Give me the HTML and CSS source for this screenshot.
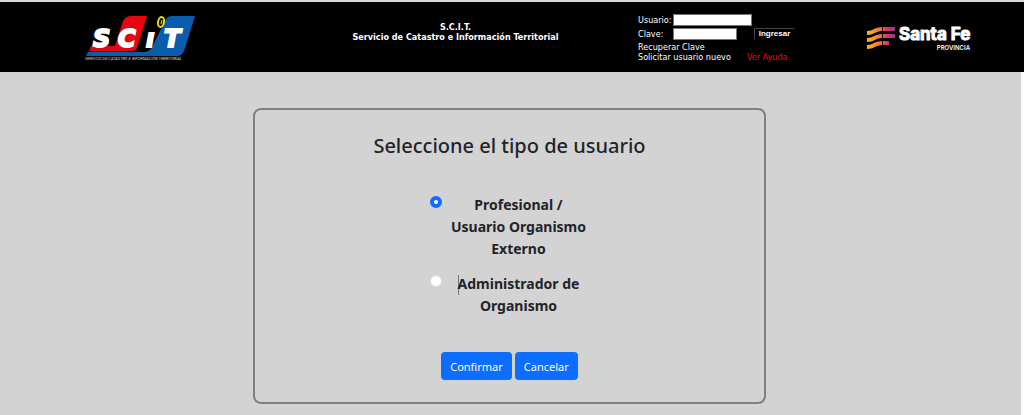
FILE: index.html
```html
<!DOCTYPE html>
<html lang="es">
  <head>
    <meta charset="UTF-8" />
    <meta name="viewport" content="width=device-width, initial-scale=1.0" />
    <title>S.C.I.T.</title>
    <link rel="stylesheet" href="styles.css">
  </head>
  <body>
    <header class="header">
      <svg class="logo-scit" width="112" height="48" viewBox="0 0 112 48" role="img" aria-label="SCIT">
        <path d="M38 6 Q41 1 46 1 H62 L52 33 Q51 36 47 36 H4 L6 31 H30 Z" fill="#e30613" />
        <path d="M80 6 Q82 1 87 1 H110 L99 36 Q97 41 92 41 H1 L3 37 H58 Q65 37 67 32 Z" fill="#0a5cad" />
        <g class="scit-letters">
          <text x="8" y="32">S</text>
          <text x="33" y="32">C</text>
          <text x="61" y="32">ı</text>
          <text x="79" y="32">T</text>
        </g>
        <ellipse cx="76" cy="7" rx="3" ry="5" fill="#111" stroke="#e6dc1e" stroke-width="2" transform="rotate(12 76 7)" />
        <path d="M77 5 L76 9" stroke="#e6dc1e" stroke-width="1" />
        <text class="scit-caption" x="0" y="45">SERVICIO DE CATASTRO E INFORMACIÓN TERRITORIAL</text>
      </svg>
      <div class="header-title">
        <div>S.C.I.T.</div>
        <div>Servicio de Catastro e Información Territorial</div>
      </div>
      <form class="login">
        <div class="login-row">
          <label for="usuario">Usuario:</label>
          <input type="text" id="usuario" class="login-input" />
        </div>
        <div class="login-row">
          <label for="clave">Clave:</label>
          <input type="password" id="clave" class="login-input login-input-short" />
          <button type="button" class="login-button">Ingresar</button>
        </div>
        <div class="login-links">
          <a href="#">Recuperar Clave</a>
          <div class="login-links-row">
            <a href="#">Solicitar usuario nuevo</a>
            <a href="#" class="help-link">Ver Ayuda</a>
          </div>
        </div>
      </form>
      <svg class="logo-santafe" width="108" height="34" viewBox="0 -6 108 34" role="img" aria-label="Santa Fe Provincia">
        <defs>
          <linearGradient id="flame" gradientUnits="userSpaceOnUse" x1="0" y1="0" x2="28" y2="0">
            <stop offset="0" stop-color="#fbb917" />
            <stop offset="0.5" stop-color="#f26a4b" />
            <stop offset="0.7" stop-color="#e92f68" />
            <stop offset="1" stop-color="#8a3a94" />
          </linearGradient>
        </defs>
        <g fill="url(#flame)">
          <path d="M0 5 C6 5 8 1 15 1 V5 C9 5 7 9 0 9 Z" />
          <path d="M0 12 C6 12 8 8 15 8 V12 C9 12 7 16 0 16 Z" />
          <path d="M0 19 C6 19 8 15 15 15 V19 C9 19 7 23 0 23 Z" />
          <path d="M16 1 H28 V5 H16 Z" />
          <path d="M16 8 H28 V12 H16 Z" />
          <path d="M16 15 H22 V19 H16 Z" />
        </g>
        <text class="santafe-name" x="32" y="14">Santa Fe</text>
        <text class="santafe-sub" x="103" y="24">PROVINCIA</text>
      </svg>
    </header>

    <main class="content">
      <form class="user-type">
        <h1>Seleccione el tipo de usuario</h1>
        <div class="options">
          <div class="option">
            <input type="radio" name="tipo" id="profesional" class="option-radio" checked />
            <label for="profesional">Profesional / Usuario Organismo Externo</label>
          </div>
          <div class="option">
            <input type="radio" name="tipo" id="administrador" class="option-radio" />
            <label for="administrador"><span class="caret"></span>Administrador de Organismo</label>
          </div>
        </div>
        <div class="actions">
          <button type="button" class="btn">Confirmar</button>
          <button type="button" class="btn">Cancelar</button>
        </div>
      </form>
    </main>
  </body>
</html>
```

FILE: styles.css
```css
* {
  box-sizing: border-box;
}
body {
  margin: 0;
  min-height: 100vh;
  display: flex;
  flex-direction: column;
  border-top: 2px solid #d8d8d8;
  background-color: #fff;
  color: #212529;
  font-family: "Noto Sans", "Open Sans", sans-serif;
}
.header {
  display: grid;
  grid-template-columns: 284fr 343fr 224fr 173fr;
  align-items: start;
  height: 70px;
  background-color: #000;
  color: #fff;
  font-family: "DejaVu Sans Condensed", "DejaVu Sans", sans-serif;
  font-size: 9px;
  line-height: 10px;
}
.logo-scit {
  margin-top: 13px;
  margin-left: 85px;
}
.scit-letters {
  fill: #fff;
  stroke: #fff;
  stroke-width: 2px;
  font-family: "DejaVu Sans", sans-serif;
  font-size: 24px;
  font-style: italic;
  font-weight: bold;
}
.scit-caption {
  fill: #ddd;
  font-family: Roboto, sans-serif;
  font-size: 4px;
  font-style: italic;
}
.header-title {
  margin-top: 20px;
  font-weight: bold;
  text-align: center;
}
.login {
  margin-top: 11px;
  margin-left: 11px;
}
.login-row {
  display: flex;
  align-items: center;
  height: 14px;
}
.login-row label {
  width: 35px;
}
.login-input {
  width: 79px;
  height: 12px;
  padding: 0 2px;
  border: 1px solid #767676;
  background-color: #fff;
  font-size: 9px;
}
.login-input-short {
  width: 64px;
}
.login-button {
  margin-left: 17px;
  width: 41px;
  height: 12px;
  padding: 0;
  border: 1px solid #000;
  border-top-color: #444;
  border-left-color: #444;
  background-color: #000;
  color: #fff;
  font-family: "Liberation Sans", sans-serif;
  font-size: 8px;
  font-weight: bold;
  line-height: 10px;
}
.login-links {
  margin-top: 1px;
}
.login-links a {
  color: #fff;
  text-decoration: none;
}
.login-links-row {
  display: flex;
  gap: 16px;
}
.login-links .help-link {
  color: #f00;
}
.logo-santafe {
  margin-top: 18px;
  margin-left: 16px;
}
.santafe-name {
  fill: #fff;
  stroke: #fff;
  stroke-width: 1px;
  font-family: Inter, sans-serif;
  font-size: 17px;
  font-weight: 700;
}
.santafe-sub {
  fill: #fff;
  font-family: Inter, sans-serif;
  font-size: 6px;
  font-weight: 600;
  text-anchor: end;
}
.content {
  flex: 1;
  margin-right: 3px;
  padding: 36px 18px 11px 16px;
  background-color: #d3d3d3;
}
.user-type {
  width: 100%;
  max-width: 513px;
  margin: 0 auto;
  padding: 24px 24px 22px;
  border: 2px solid #808080;
  border-radius: 8px;
  text-align: center;
}
h1 {
  margin: 0 0 36px;
  font-size: 20px;
  font-weight: 500;
  line-height: 24px;
}
.options {
  display: flex;
  flex-direction: column;
  gap: 13px;
  width: 160px;
  margin: 0 auto;
}
.option {
  display: flex;
  align-items: flex-start;
  font-size: 14px;
  font-weight: bold;
  line-height: 22px;
}
.option label {
  flex: 1;
}
.option-radio {
  appearance: none;
  flex: none;
  width: 12px;
  height: 12px;
  margin: 2px 6px 0 0;
  border: 1px solid #ddd;
  border-radius: 50%;
  background-color: #fff;
}
.option-radio:checked {
  border: 4px solid #0d6efd;
}
.caret {
  display: inline-block;
  width: 1px;
  height: 20px;
  margin-right: -1px;
  background-color: #777;
  vertical-align: middle;
}
.actions {
  display: flex;
  justify-content: center;
  gap: 3px;
  margin-top: 35px;
}
.btn {
  height: 28px;
  padding: 0 9px;
  border: none;
  border-radius: 4px;
  background-color: #0d6efd;
  color: #fff;
  font-family: inherit;
  font-size: 11px;
  cursor: pointer;
}
```
